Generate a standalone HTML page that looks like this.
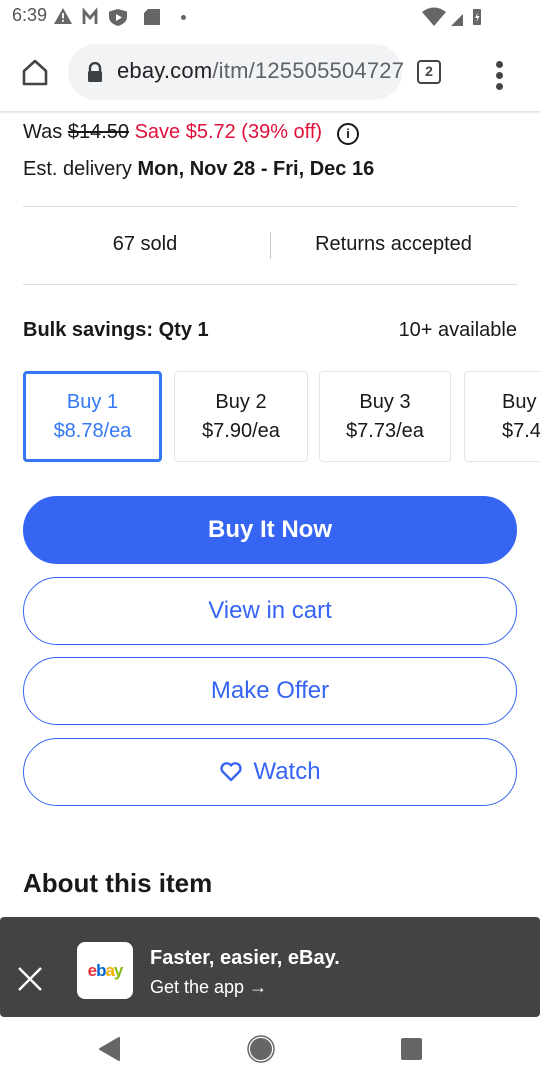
<!DOCTYPE html>
<html><head><meta charset="utf-8"><style>
*{margin:0;padding:0;box-sizing:border-box}
body{width:540px;height:1080px;overflow:hidden;background:#fff;font-family:"Liberation Sans",sans-serif;color:#191919;position:relative}
.a{position:absolute}
.btn{position:absolute;left:23px;width:494px;height:68px;border-radius:34px;border:1.5px solid #3665f3;color:#3665f3;font-size:24px;display:flex;align-items:center;justify-content:center}
.box{position:absolute;top:371px;height:91px;border:1px solid #e5e5e5;border-radius:4px;text-align:center;font-size:20px;line-height:29px;padding-top:16px;color:#191919}
</style></head><body>
<!-- status bar -->
<div class="a" style="left:12px;top:5px;font-size:18px;color:#555">6:39</div>
<svg class="a" style="left:54px;top:7px" width="120" height="22" viewBox="0 0 120 22">
<path d="M9 1 L18 17 H0 Z" fill="#666"/><rect x="8.1" y="6" width="1.8" height="5.5" fill="#fff"/><rect x="8.1" y="13" width="1.8" height="1.8" fill="#fff"/>
<path d="M30 17 V4 L36 11 L42 4 V17" stroke="#666" stroke-width="2.8" fill="none"/>
<path d="M64 2 L73 4.5 V10 Q73 16 64 19 Q55 16 55 10 V4.5 Z" fill="#666"/><path d="M62 7 L68 10.5 L62 14Z" fill="#fff"/>
<path d="M94 2 H106 V18 H90 V6 Z" fill="#666"/></svg>
<div class="a" style="left:181px;top:15px;width:5px;height:5px;border-radius:50%;background:#666"></div>
<svg class="a" style="left:422px;top:6px" width="100" height="22" viewBox="0 0 100 22">
<path d="M0 6 Q12 -3 24 6 L12 20 Z" fill="#666"/><path d="M29 20 L41 8 V20 Z" fill="#666"/>
<rect x="51" y="3" width="8" height="16" rx="1" fill="#666"/><path d="M56 6 L53 12 H55.5 L54 17 L57.5 10 H55 Z" fill="#fff"/></svg>
<!-- toolbar -->
<svg class="a" style="left:20px;top:58px" width="30" height="28" viewBox="0 0 30 28"><path d="M4 13 L15 3 L26 13 V26 H4 Z" fill="none" stroke="#444" stroke-width="2.6" stroke-linejoin="round"/></svg>
<div class="a" style="left:68px;top:44px;width:334px;height:56px;border-radius:28px;background:#f1f3f4"></div>
<svg class="a" style="left:86px;top:62px" width="18" height="20" viewBox="0 0 18 20"><path d="M4 9 V6 A5 5 0 0 1 14 6 V9" fill="none" stroke="#3c4043" stroke-width="2.4"/><rect x="2" y="9" width="14" height="11" rx="1.5" fill="#3c4043"/></svg>
<div class="a" style="left:117px;top:58px;font-size:22px;color:#202124;letter-spacing:0.2px">ebay.com<span style="color:#5f6368">/itm/125505504727</span></div>
<div class="a" style="left:417px;top:60px;width:24px;height:24px;border:2.6px solid #444;border-radius:4px;font-size:14px;font-weight:bold;text-align:center;line-height:19px;color:#444">2</div>
<div class="a" style="left:496px;top:61px;width:7px;height:7px;border-radius:50%;background:#444;box-shadow:0 11px 0 #444,0 22px 0 #444"></div>
<div class="a" style="left:0;top:111px;width:540px;height:3px;background:linear-gradient(#ddd,#fff)"></div>
<!-- price -->
<div class="a" style="left:23px;top:121px;font-size:20px;color:#191919">Was <span style="text-decoration:line-through">$14.50</span> <span style="color:#e0103a">Save $5.72 (39% off)</span></div>
<div class="a" style="left:337px;top:123px;width:22px;height:22px;border:2px solid #191919;border-radius:50%;font-size:13px;font-weight:bold;text-align:center;line-height:18px">i</div>
<div class="a" style="left:23px;top:158px;font-size:20px">Est. delivery <b>Mon, Nov 28 - Fri, Dec 16</b></div>
<div class="a" style="left:23px;top:206px;width:494px;height:1px;background:#ddd"></div>
<div class="a" style="left:0;top:233px;width:270px;text-align:center;font-size:20px;padding-left:20px">67 sold</div>
<div class="a" style="left:270px;top:232px;width:1px;height:27px;background:#ccc"></div>
<div class="a" style="left:271px;top:233px;width:245px;text-align:center;font-size:20px">Returns accepted</div>
<div class="a" style="left:23px;top:284px;width:494px;height:1px;background:#ddd"></div>
<div class="a" style="left:23px;top:319px;font-size:20px;font-weight:bold">Bulk savings: Qty 1</div>
<div class="a" style="right:23px;top:319px;font-size:20px">10+ available</div>
<!-- boxes -->
<div class="box" style="left:23px;width:139px;border:3px solid #3478f6;color:#3478f6;padding-top:14px">Buy 1<br>$8.78/ea</div>
<div class="box" style="left:174px;width:134px">Buy 2<br>$7.90/ea</div>
<div class="box" style="left:319px;width:132px">Buy 3<br>$7.73/ea</div>
<div class="box" style="left:464px;width:76px;text-align:left;padding-left:37px;border-right:none;border-radius:4px 0 0 4px;overflow:hidden;white-space:nowrap">Buy 4<br>$7.46/ea</div>
<!-- buttons -->
<div class="btn" style="top:496px;background:#3665f3;color:#fff;font-weight:bold">Buy It Now</div>
<div class="btn" style="top:577px">View in cart</div>
<div class="btn" style="top:657px">Make Offer</div>
<div class="btn" style="top:738px"><svg width="24" height="22" viewBox="0 0 24 22" style="margin-right:10px"><path d="M12 19 L3.5 10.5 A4.8 4.8 0 0 1 12 4.5 A4.8 4.8 0 0 1 20.5 10.5 Z" fill="none" stroke="#3665f3" stroke-width="2.4" stroke-linejoin="round"/></svg>Watch</div>
<div class="a" style="left:23px;top:868px;font-size:26px;font-weight:bold">About this item</div>
<!-- banner -->
<div class="a" style="left:0;top:917px;width:540px;height:100px;background:#434341;border-radius:4px"></div>
<svg class="a" style="left:16px;top:965px" width="28" height="28" viewBox="0 0 28 28"><path d="M3 3 L25 25 M25 3 L3 25" stroke="#fff" stroke-width="2.4"/></svg>
<div class="a" style="left:77px;top:942px;width:56px;height:57px;background:#fff;border-radius:8px;font-size:17px;font-weight:bold;text-align:center;line-height:57px;letter-spacing:-1px"><span style="color:#e53238">e</span><span style="color:#0064d2">b</span><span style="color:#f5af02">a</span><span style="color:#86b817">y</span></div>
<div class="a" style="left:150px;top:947px;font-size:20px;font-weight:bold;color:#fff">Faster, easier, eBay.</div>
<div class="a" style="left:150px;top:977px;font-size:18px;color:#fff">Get the app →</div>
<!-- nav -->
<svg class="a" style="left:95px;top:1030px" width="350" height="40" viewBox="0 0 350 40"><path d="M24 8 V30 L5 19 Z" fill="#666" stroke="#666" stroke-linejoin="round" stroke-width="2"/><circle cx="166" cy="19" r="12" fill="#666" stroke="#fff" stroke-width="2"/><circle cx="166" cy="19" r="13" fill="none" stroke="#666" stroke-width="1.5"/><rect x="306" y="8" width="21" height="22" rx="2" fill="#666"/></svg>
</body></html>
